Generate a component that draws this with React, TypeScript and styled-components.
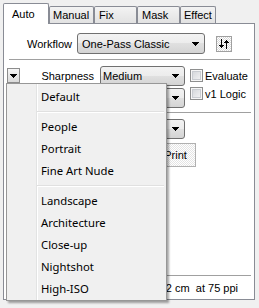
import React from "react";
import styled, { createGlobalStyle, css } from "styled-components";

const GlobalStyle = createGlobalStyle`
  html, body { margin: 0; padding: 0; }
  body {
    width: 259px;
    height: 308px;
    overflow: hidden;
    background: #f0f0f0;
    font-family: "Liberation Sans", Arial, sans-serif;
    font-size: 11px;
    color: #000;
  }
  #root { width: 259px; height: 308px; }
`;

const Window = styled.div`
  position: relative;
  box-sizing: border-box;
  width: 259px;
  height: 308px;
  padding: 3px 4px 0 3px;
  background: #f0f0f0;
`;

const TabStrip = styled.div`
  display: flex;
  align-items: flex-end;
  height: 20px;
  position: relative;
  z-index: 2;
`;

const Tab = styled.div<{ $active?: boolean; $w: number; $pl: number }>`
  box-sizing: border-box;
  width: ${(p) => p.$w}px;
  padding-left: ${(p) => p.$pl}px;
  display: flex;
  align-items: center;
  border: 1px solid #898c95;
  border-bottom: none;
  border-radius: 2px 2px 0 0;
  white-space: nowrap;
  ${(p) =>
    p.$active
      ? css`
          height: 21px;
          margin-bottom: -1px;
          background: #fff;
        `
      : css`
          height: 17px;
          background: linear-gradient(#f3f3f3, #e2e2e2);
        `}
`;

const Panel = styled.div`
  box-sizing: border-box;
  width: 252px;
  height: 277px;
  border: 1px solid #898c95;
  background: #fff;
  display: flex;
  flex-direction: column;
`;

const WorkflowRow = styled.div`
  display: flex;
  align-items: center;
  margin-top: 9px;
  height: 21px;
`;

const FieldLabel = styled.span<{ $w: number; $pr?: number }>`
  box-sizing: border-box;
  width: ${(p) => p.$w}px;
  padding-right: ${(p) => p.$pr ?? 5}px;
  text-align: right;
  white-space: nowrap;
  line-height: 20px;
`;

const Combo = styled.div<{ $w: number; $h: number; $pl: number }>`
  box-sizing: border-box;
  width: ${(p) => p.$w}px;
  height: ${(p) => p.$h}px;
  padding-left: ${(p) => p.$pl}px;
  padding-right: 5px;
  display: flex;
  align-items: center;
  border: 1px solid #707070;
  border-radius: 3px;
  background: linear-gradient(#f3f3f3, #ececec 50%, #e0e0e0 50%, #d4d4d4);
  white-space: nowrap;
`;

const ComboText = styled.span`
  flex: 1;
  overflow: hidden;
`;

const Arrow = () => (
  <svg width="7" height="4" viewBox="0 0 7 4" shapeRendering="crispEdges">
    <path d="M0 0h7L3.5 4z" fill="#000" />
  </svg>
);

const ToggleIcon = styled.div`
  box-sizing: border-box;
  width: 16px;
  height: 16px;
  margin-left: 11px;
  border: 1px solid #a0a0a0;
  background: repeating-conic-gradient(#ffffff 0 25%, #d8d8d8 0 50%) 0 0 / 2px 2px;
  display: flex;
  align-items: center;
  justify-content: center;
`;

const Rule = styled.div<{ $ml: number; $mr: number; $mt: number }>`
  height: 1px;
  margin: ${(p) => p.$mt}px ${(p) => p.$mr}px 0 ${(p) => p.$ml}px;
  background: #a0a0a0;
  flex-shrink: 0;
`;

const OptionsRow = styled.div`
  display: flex;
  align-items: flex-start;
  margin-top: 6px;
`;

const MiniDrop = styled.div`
  box-sizing: border-box;
  width: 13px;
  height: 15px;
  margin: 2px 0 0 3px;
  padding-top: 5px;
  border: 1px solid #8c8c8c;
  background: linear-gradient(#f6f6f6, #dadada);
  display: flex;
  justify-content: center;
`;

const ComboColumn = styled.div`
  display: flex;
  flex-direction: column;
  gap: 2px;
`;

const CheckColumn = styled.div`
  display: flex;
  flex-direction: column;
  gap: 5px;
  margin-left: 5px;
  padding-top: 3px;
`;

const CheckRow = styled.label`
  display: flex;
  align-items: center;
  gap: 2px;
  height: 13px;
  white-space: nowrap;
`;

const CheckBox = styled.span`
  box-sizing: border-box;
  width: 13px;
  height: 13px;
  border: 1px solid #8e8f8f;
  background: linear-gradient(135deg, #cfd2d6, #f7f7f7);
  box-shadow: inset 0 0 0 1px #f6f6f6, inset 0 0 0 2px #c9ccd1;
`;

const StyleRow = styled.div`
  display: flex;
  margin-top: 6px;
  padding-left: 96px;
`;

const PrintToggle = styled.div`
  box-sizing: border-box;
  width: 41px;
  height: 24px;
  margin: 4px 0 0 151px;
  border: 1px solid #b0b0b0;
  background: repeating-conic-gradient(#ffffff 0 25%, #e4e4e4 0 50%) 0 0 / 2px 2px;
  display: flex;
  align-items: center;
  justify-content: center;
`;

const Footer = styled.div`
  margin-top: auto;
  display: flex;
  flex-direction: column;
  padding-bottom: 4px;
`;

const SizeText = styled.div`
  height: 14px;
  margin-top: 5px;
  padding-right: 16px;
  text-align: right;
  line-height: 14px;
  white-space: pre;
`;

const Menu = styled.div`
  position: absolute;
  left: 6px;
  top: 83px;
  width: 161px;
  box-sizing: border-box;
  padding: 1px 2px;
  border: 1px solid #979797;
  background: #f0f0f0
    linear-gradient(
      to right,
      transparent 29px,
      #e2e3e3 29px,
      #e2e3e3 30px,
      #ffffff 30px,
      #ffffff 31px,
      transparent 31px
    );
  box-shadow: 2px 2px 2px rgba(0, 0, 0, 0.35);
  font-family: "Noto Sans", "Open Sans", sans-serif;
  font-size: 11.3px;
  color: #000;
  z-index: 5;
`;

const MenuItem = styled.div`
  height: 22px;
  padding-left: 32px;
  display: flex;
  align-items: center;
  white-space: nowrap;
`;

const MenuSeparator = styled.div`
  height: 0;
  margin: 4px 0 2px 28px;
  border-top: 1px solid #e0e0e0;
  border-bottom: 1px solid #ffffff;
`;

const groups = [
  ["Default"],
  ["People", "Portrait", "Fine Art Nude"],
  ["Landscape", "Architecture", "Close-up", "Nightshot", "High-ISO"],
];

const tabs = [
  { label: "Auto", w: 46, pl: 8, active: true },
  { label: "Manual", w: 45, pl: 3 },
  { label: "Fix", w: 43, pl: 4 },
  { label: "Mask", w: 43, pl: 4 },
  { label: "Effect", w: 36, pl: 3 },
];

export default function App() {
  return (
    <>
      <GlobalStyle />
      <Window>
        <TabStrip>
          {tabs.map((t) => (
            <Tab key={t.label} $w={t.w} $pl={t.pl} $active={t.active}>
              {t.label}
            </Tab>
          ))}
        </TabStrip>
        <Panel>
          <WorkflowRow>
            <FieldLabel $w={73}>Workflow</FieldLabel>
            <Combo $w={128} $h={21} $pl={4}>
              <ComboText>One-Pass Classic</ComboText>
              <Arrow />
            </Combo>
            <ToggleIcon>
              <svg width="12" height="12" viewBox="0 0 12 12" shapeRendering="crispEdges">
                <rect x="3" y="1" width="1" height="7" fill="#000" />
                <path d="M1 7h5l-2.5 3.5z" fill="#000" />
                <rect x="8" y="4" width="1" height="7" fill="#000" />
                <path d="M6 5h5L8.5 1.5z" fill="#000" />
              </svg>
            </ToggleIcon>
          </WorkflowRow>
          <Rule $ml={5} $mr={4} $mt={5} />
          <OptionsRow>
            <MiniDrop>
              <Arrow />
            </MiniDrop>
            <FieldLabel $w={80} $pr={6}>
              Sharpness
            </FieldLabel>
            <ComboColumn>
              <Combo $w={85} $h={20} $pl={2}>
                <ComboText>Medium</ComboText>
                <Arrow />
              </Combo>
              <Combo $w={85} $h={20} $pl={2}>
                <ComboText>Normal</ComboText>
                <Arrow />
              </Combo>
            </ComboColumn>
            <CheckColumn>
              <CheckRow>
                <CheckBox />
                Evaluate
              </CheckRow>
              <CheckRow>
                <CheckBox />
                v1 Logic
              </CheckRow>
            </CheckColumn>
          </OptionsRow>
          <Rule $ml={5} $mr={3} $mt={4} />
          <StyleRow>
            <Combo $w={85} $h={20} $pl={2}>
              <ComboText>Standard</ComboText>
              <Arrow />
            </Combo>
          </StyleRow>
          <PrintToggle>Print</PrintToggle>
          <Footer>
            <Rule $ml={5} $mr={3} $mt={0} />
            <SizeText>{"x 12 cm  at 75 ppi"}</SizeText>
          </Footer>
        </Panel>
        <Menu>
          {groups.map((g, gi) => (
            <React.Fragment key={gi}>
              {gi > 0 && <MenuSeparator />}
              {g.map((item) => (
                <MenuItem key={item}>{item}</MenuItem>
              ))}
            </React.Fragment>
          ))}
        </Menu>
      </Window>
    </>
  );
}
